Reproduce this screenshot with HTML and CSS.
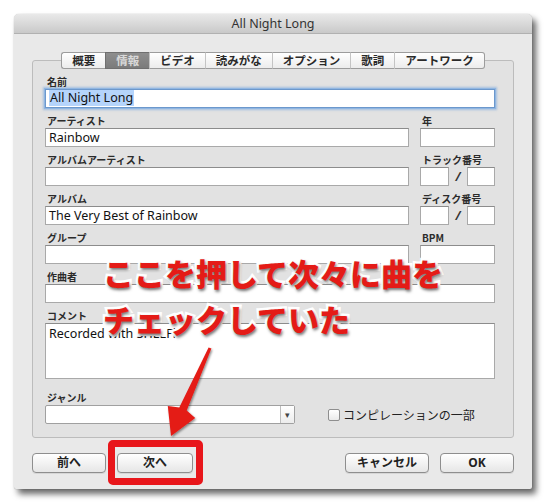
FILE: index.html
```html
<!DOCTYPE html>
<html lang="ja">
<head>
<meta charset="utf-8">
<title>All Night Long</title>
<link rel="stylesheet" href="styles.css">
</head>
<body>
<div class="stage">
  <div class="window">
    <div class="titlebar">All Night Long</div>
    <div class="content">
      <div class="group">
        <div class="tabs">
          <span class="tab">概要</span>
          <span class="tab active">情報</span>
          <span class="tab">ビデオ</span>
          <span class="tab">読みがな</span>
          <span class="tab">オプション</span>
          <span class="tab">歌詞</span>
          <span class="tab last">アートワーク</span>
        </div>
        <div class="form">
          <div class="fld span2">
            <div class="lbl">名前</div>
            <div class="input focus"><span class="sel">All Night Long</span></div>
          </div>
          <div class="fld">
            <div class="lbl">アーティスト</div>
            <div class="input">Rainbow</div>
          </div>
          <div class="fld">
            <div class="lbl">年</div>
            <div class="input"></div>
          </div>
          <div class="fld">
            <div class="lbl">アルバムアーティスト</div>
            <div class="input"></div>
          </div>
          <div class="fld">
            <div class="lbl">トラック番号</div>
            <div class="pair"><div class="input small"></div><span class="slash">/</span><div class="input small"></div></div>
          </div>
          <div class="fld">
            <div class="lbl">アルバム</div>
            <div class="input">The Very Best of Rainbow</div>
          </div>
          <div class="fld">
            <div class="lbl">ディスク番号</div>
            <div class="pair"><div class="input small"></div><span class="slash">/</span><div class="input small"></div></div>
          </div>
          <div class="fld">
            <div class="lbl">グループ</div>
            <div class="input"></div>
          </div>
          <div class="fld">
            <div class="lbl">BPM</div>
            <div class="input"></div>
          </div>
          <div class="fld span2">
            <div class="lbl">作曲者</div>
            <div class="input"></div>
          </div>
          <div class="fld span2">
            <div class="lbl">コメント</div>
            <div class="input area">Recorded with SHELFi</div>
          </div>
          <div class="fld span2 genre">
            <div class="lbl">ジャンル</div>
            <div class="genre-row">
              <div class="select"><span class="select-val"></span><span class="select-btn">▾</span></div>
              <label class="check"><span class="box"></span>コンピレーションの一部</label>
            </div>
          </div>
        </div>
      </div>
      <div class="buttons">
        <div class="btn-group">
          <span class="btn prev">前へ</span>
          <span class="btn next">次へ</span>
        </div>
        <div class="btn-group">
          <span class="btn cancel">キャンセル</span>
          <span class="btn ok">OK</span>
        </div>
      </div>
    </div>
  </div>

  <div class="note">ここを押して次々に曲を<br>チェックしていた</div>
  <svg class="arrow" width="546" height="504" viewBox="0 0 546 504">
    <defs>
      <filter id="sh" x="-20%" y="-20%" width="140%" height="140%">
        <feDropShadow dx="1" dy="1.5" stdDeviation="1.2" flood-color="#000" flood-opacity="0.45"/>
      </filter>
    </defs>
    <path d="M208.6,347.4 L211.4,348.6 L186.7,410.6 L195.2,418.1 L171,436 L167.8,405.9 L179.3,407.4 Z" fill="#e41b17" filter="url(#sh)"/>
  </svg>
  <div class="mark"></div>
</div>
</body>
</html>
```

FILE: styles.css
```css
* { box-sizing: border-box; }

html, body {
  margin: 0;
  padding: 0;
  background: #ffffff;
}

body {
  font-family: "Noto Sans", "Noto Sans CJK JP", sans-serif;
  color: #222;
}

.stage {
  position: relative;
  width: 546px;
  height: 504px;
  padding: 14px 0 0 14px;
}

.window {
  width: 518px;
  background: #e9e9e9;
  border-radius: 5px 5px 2px 2px;
  box-shadow: 4px 5px 6px rgba(0, 0, 0, 0.6), 0 0 1px rgba(0,0,0,0.35);
  overflow: hidden;
}

.titlebar {
  height: 20px;
  line-height: 20px;
  text-align: center;
  font-size: 12.5px;
  color: #333;
  background: linear-gradient(#e9e9e9, #c9c9c9);
  border-bottom: 1px solid #b1b1b1;
}

.content {
  padding: 26px 18px 16px 18px;
}

.group {
  border: 1px solid #bcbcbc;
  border-radius: 3px;
  background: #e2e2e2;
  padding: 0 18px 13px 12px;
}

.tabs {
  display: flex;
  justify-content: center;
  margin: -9px -18px 0 -12px;
}

.tab {
  flex: 0 0 auto;
  white-space: nowrap;
  height: 17px;
  line-height: 15px;
  padding: 0 10px;
  font-family: "Noto Sans CJK JP", sans-serif;
  font-size: 11.5px;
  font-weight: 700;
  color: #2a2a2a;
  background: linear-gradient(#ffffff, #ececec);
  border: 1px solid #9c9c9c;
  border-left: 1px solid #c4c4c4;
  border-right: none;
}

.tab:first-child {
  border-left: 1px solid #9c9c9c;
  border-radius: 3px 0 0 3px;
}

.tab.last {
  border-right: 1px solid #9c9c9c;
  border-radius: 0 3px 3px 0;
}

.tab.active {
  background: linear-gradient(#8e8e8e, #7b7b7b);
  color: #d8d8d8;
  border-color: #6f6f6f;
}

.form {
  display: grid;
  grid-template-columns: 364px 75px;
  column-gap: 11px;
  row-gap: 5px;
  margin-top: 5px;
}

.span2 { grid-column: 1 / span 2; }

.lbl {
  height: 15px;
  line-height: 15px;
  font-family: "Noto Sans CJK JP", sans-serif;
  font-size: 10px;
  font-weight: 700;
  color: #2b2b2b;
  padding-left: 2px;
}

.input {
  height: 19px;
  background: #ffffff;
  border: 1px solid #a9a9a9;
  border-top-color: #8c8c8c;
  font-size: 12.5px;
  line-height: 17px;
  padding-left: 3px;
  color: #111;
  white-space: nowrap;
  overflow: hidden;
}

.input.focus {
  border-color: #6c98cc;
  box-shadow: 0 0 0 1px #90b6e2, 0 0 2px 2px rgba(110, 160, 220, 0.55);
  line-height: 16px;
}

.sel {
  background: #b5d4fb;
  padding: 0 1px;
}

.input.area {
  height: 56px;
  line-height: 19px;
}

.pair {
  display: flex;
  align-items: center;
}

.input.small { width: 29px; }
.pair .input.small:last-child { width: 28px; }

.slash {
  width: 18px;
  text-align: center;
  font-size: 12px;
  font-weight: 700;
  font-style: italic;
  color: #333;
}

.genre { margin-top: 6px; }

.genre-row {
  display: flex;
  align-items: center;
}

.select {
  width: 250px;
  height: 19px;
  display: flex;
  background: #ffffff;
  border: 1px solid #a0a0a0;
  border-radius: 2px;
}

.select-val { flex: 1; }

.select-btn {
  width: 14px;
  border-left: 1px solid #bdbdbd;
  background: linear-gradient(#ffffff, #ececec);
  font-size: 9px;
  line-height: 17px;
  text-align: center;
  color: #444;
}

.check {
  display: flex;
  align-items: center;
  margin-left: 33px;
  font-family: "Noto Sans CJK JP", sans-serif;
  font-size: 12px;
  color: #222;
}

.check .box {
  width: 12px;
  height: 12px;
  border: 1px solid #8e8e8e;
  border-radius: 2px;
  background: linear-gradient(#ffffff, #eaeaea);
  margin-right: 3px;
}

.buttons {
  display: flex;
  justify-content: space-between;
  margin-top: 15px;
}

.btn-group {
  display: flex;
  gap: 11px;
}

.btn {
  height: 20px;
  line-height: 18px;
  text-align: center;
  font-family: "Noto Sans", "Noto Sans CJK JP", sans-serif;
  font-size: 12px;
  font-weight: 700;
  color: #222;
  background: linear-gradient(#ffffff, #e6e6e6);
  border: 1px solid #8e8e8e;
  border-radius: 4px;
  box-shadow: 0 1px 0 rgba(0,0,0,0.08);
}

.prev { width: 74px; }
.next { width: 76px; }
.cancel { width: 84px; }
.ok { width: 74px; }

.note {
  position: absolute;
  left: 103px;
  top: 250px;
  font-family: "Noto Sans CJK JP", sans-serif;
  font-size: 31px;
  font-weight: 900;
  line-height: 46px;
  color: #e41b17;
  -webkit-text-stroke: 5px #ffffff;
  paint-order: stroke fill;
  text-shadow: 1px 2px 3px rgba(0, 0, 0, 0.55);
  white-space: nowrap;
}

.arrow {
  position: absolute;
  left: 0;
  top: 0;
  pointer-events: none;
}

.mark {
  position: absolute;
  left: 108px;
  top: 440px;
  width: 95px;
  height: 45px;
  border: 7px solid #e8161b;
  border-radius: 5px;
}
```
